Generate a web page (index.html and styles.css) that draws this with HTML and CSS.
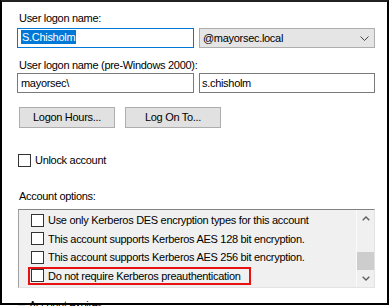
FILE: index.html
```html
<!DOCTYPE html>
<html>
<head>
<meta charset="utf-8">
<link rel="stylesheet" href="styles.css">
</head>
<body>
<div class="frame">
  <div class="label first">User logon name:</div>
  <div class="row">
    <div class="input focused"><span class="sel">S.Chisholm</span></div>
    <div class="combo">
      <span>@mayorsec.local</span>
      <svg class="combo-arrow" width="9" height="5" viewBox="0 0 9 5"><path d="M0.5 0.5 L4.5 4.5 L8.5 0.5" fill="none" stroke="#444" stroke-width="1"/></svg>
    </div>
  </div>
  <div class="label second">User logon name (pre-Windows 2000):</div>
  <div class="row">
    <div class="input">mayorsec\</div>
    <div class="input right">s.chisholm</div>
  </div>
  <div class="buttons">
    <div class="btn">Logon Hours...</div>
    <div class="btn">Log On To...</div>
  </div>
  <div class="check unlock"><span class="box"></span><span>Unlock account</span></div>
  <div class="label options">Account options:</div>
  <div class="list">
    <div class="items">
      <div class="item"><span class="box"></span><span>Use only Kerberos DES encryption types for this account</span></div>
      <div class="item"><span class="box"></span><span>This account supports Kerberos AES 128 bit encryption.</span></div>
      <div class="item"><span class="box"></span><span>This account supports Kerberos AES 256 bit encryption.</span></div>
      <div class="item marked"><span class="box"></span><span>Do not require Kerberos preauthentication</span></div>
    </div>
    <div class="scrollbar">
      <div class="sb-btn"><svg width="8" height="5" viewBox="0 0 8 5"><path d="M0.7 4.3 L4 1 L7.3 4.3" fill="none" stroke="#606060" stroke-width="1.4"/></svg></div>
      <div class="sb-track"><div class="sb-thumb"></div></div>
      <div class="sb-btn"><svg width="8" height="5" viewBox="0 0 8 5"><path d="M0.7 0.7 L4 4 L7.3 0.7" fill="none" stroke="#606060" stroke-width="1.4"/></svg></div>
    </div>
  </div>
  <div class="expires"><span class="gline"></span><span>Account expires</span></div>
</div>
</body>
</html>
```
FILE: styles.css
```css
html, body {
  margin: 0;
  padding: 0;
  background: #ffffff;
}
body {
  width: 391px;
  height: 306px;
  overflow: hidden;
  font-family: "Liberation Sans", Arial, sans-serif;
  font-size: 11px;
  letter-spacing: -0.3px;
  color: #000;
}
.frame {
  position: relative;
  width: 389px;
  height: 305px;
  box-sizing: border-box;
  padding: 0 0 0 17px;
  background: #fff;
}
.frame::after {
  content: "";
  position: absolute;
  left: 0;
  top: 0;
  right: 0;
  bottom: 0;
  border: 2px solid #000;
  border-top-color: #222;
  pointer-events: none;
}
.label {
  line-height: 14px;
  height: 14px;
  margin-left: 2px;
}
.label.first {
  padding-top: 11px;
  margin-bottom: 3px;
}
.label.second {
  margin-top: 10px;
  margin-bottom: 1px;
}
.label.options {
  margin-top: 22px;
  margin-bottom: 6px;
}
.row {
  display: flex;
  gap: 5px;
}
.input {
  box-sizing: border-box;
  width: 177px;
  height: 20px;
  border: 1px solid #7a7a7a;
  background: #fff;
  padding-left: 3px;
  line-height: 18px;
  white-space: nowrap;
}
.input.right {
  width: 176px;
  padding-left: 2px;
}
.input.focused {
  border-color: #0078d7;
}
.sel {
  display: inline-block;
  background: #0078d7;
  color: #fff;
  line-height: 14px;
  padding: 0 1px;
  vertical-align: 1px;
}
.combo {
  box-sizing: border-box;
  width: 176px;
  height: 20px;
  border: 1px solid #adadad;
  background: #e5e5e5;
  display: flex;
  align-items: center;
  justify-content: space-between;
  padding: 0 5px 0 3px;
  line-height: 18px;
}
.combo-arrow {
  display: block;
  margin-top: 1px;
}
.buttons {
  display: flex;
  gap: 10px;
  margin: 14px 0 0 2px;
}
.btn {
  box-sizing: border-box;
  width: 96px;
  height: 21px;
  border: 1px solid #adadad;
  background: #e1e1e1;
  text-align: center;
  line-height: 19px;
}
.check {
  display: flex;
  align-items: center;
  gap: 4px;
  height: 14px;
  line-height: 14px;
  margin: 25px 0 0 1px;
}
.box {
  flex: none;
  box-sizing: border-box;
  width: 13px;
  height: 13px;
  border: 1px solid #333;
  background: #fff;
}
.list {
  box-sizing: border-box;
  width: 357px;
  height: 79px;
  margin-left: 1px;
  border-top: 1px solid #828282;
  border-left: 1px solid #a0a0a0;
  border-right: 1px solid #e3e3e3;
  border-bottom: 1px solid #e3e3e3;
  background: #f0f0f0;
  display: flex;
}
.items {
  flex: 1;
  padding: 1px 0 0 12px;
}
.item {
  position: relative;
  display: flex;
  align-items: center;
  gap: 4px;
  height: 18.5px;
  white-space: nowrap;
}
.item.marked::after {
  content: "";
  position: absolute;
  left: -3px;
  top: 0;
  width: 223px;
  height: 18px;
  box-sizing: border-box;
  border: 2px solid #e81010;
}
.scrollbar {
  width: 17px;
  display: flex;
  flex-direction: column;
  border-left: 1px solid #fafafa;
  background: #f0f0f0;
}
.sb-btn {
  height: 17px;
  display: flex;
  align-items: center;
  justify-content: center;
}
.sb-btn svg {
  display: block;
}
.sb-track {
  flex: 1;
  display: flex;
  flex-direction: column;
  justify-content: flex-end;
}
.sb-thumb {
  height: 18px;
  background: #cdcdcd;
}
.expires {
  display: flex;
  align-items: center;
  gap: 4px;
  margin: 10px 0 0 1px;
  line-height: 14px;
  color: #000;
}
.gline {
  width: 7px;
  border-top: 1px solid #dcdcdc;
}
```
